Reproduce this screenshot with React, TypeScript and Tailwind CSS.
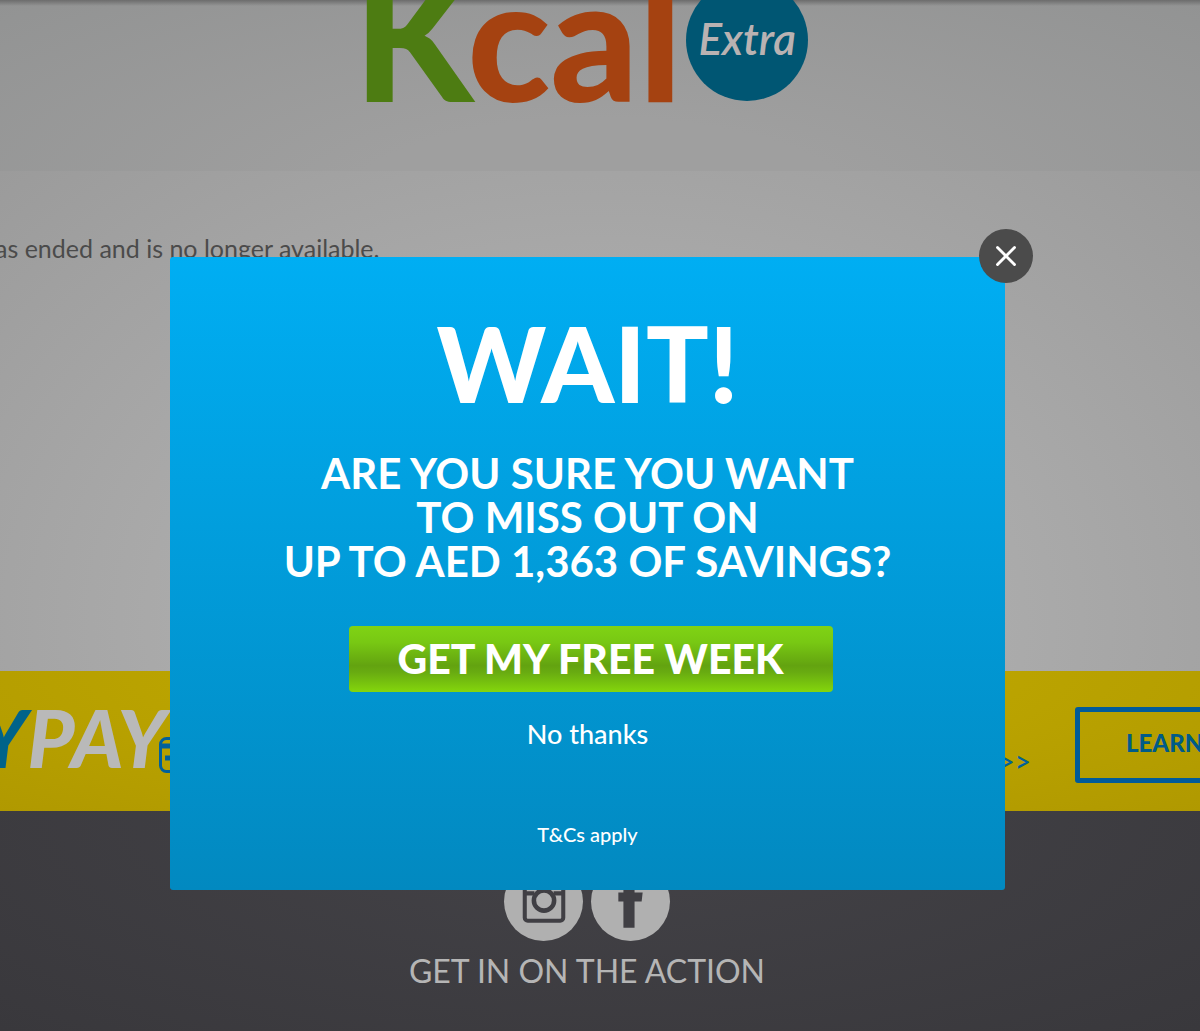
import { X } from "lucide-react";

function InstagramIcon() {
  return (
    <svg viewBox="0 0 78 78" className="size-full" fill="none" aria-hidden="true">
      <rect x="20.5" y="20" width="38" height="38" rx="3" stroke="#403f44" strokeWidth="4" />
      <path d="M20 31h10M49 31h10" stroke="#403f44" strokeWidth="4" />
      <circle cx="39.5" cy="38" r="10" stroke="#403f44" strokeWidth="4.5" />
    </svg>
  );
}

function FacebookIcon() {
  return (
    <svg viewBox="0 0 78 78" className="size-full" aria-hidden="true">
      <path
        d="M32 65V39h-5v-9h5v-6c0-7 4-10 10-10h8v9h-4c-2 0-3 1-3 3v4h8l-1 9h-7v26z"
        fill="#403f44"
      />
    </svg>
  );
}

function CardIcon() {
  return (
    <svg viewBox="0 0 50 36" className="h-9 w-[50px] shrink-0" fill="none" aria-hidden="true">
      <rect x="1.5" y="1.5" width="47" height="33" rx="6" stroke="#00609c" strokeWidth="3" />
      <path d="M1 9h48" stroke="#00609c" strokeWidth="5" />
      <path d="M6 21h10" stroke="#00609c" strokeWidth="5" />
    </svg>
  );
}

function SiteHeader() {
  return (
    <header className="flex h-[171px] items-start justify-center gap-1 overflow-hidden bg-[linear-gradient(to_bottom,#6c6c6c,#6c6c6c00_6px),radial-gradient(ellipse_at_50%_120%,#9f9f9f_30%,#929393)] pr-[38px]">
      <div className="mt-[-54px] text-[172px] leading-[180px] font-black text-[#a54211]">
        <span className="text-[#4d7c12]">K</span>cal
      </div>
      <div className="mt-[-21px] flex size-[122px] items-center justify-center rounded-full bg-[#005673] pb-1 text-[44px] font-semibold text-[#b9b2b2] italic">
        Extra
      </div>
    </header>
  );
}

function PayBanner() {
  return (
    <section className="flex h-[140px] items-center justify-between overflow-hidden bg-[radial-gradient(ellipse_at_50%_0%,#c4ad00,#b09900)]">
      <div className="flex shrink-0 items-center">
        <p className="-ml-[22px] pb-2 text-[80px] leading-[84px] font-black text-[#b9b9b9] italic">
          <span className="text-[#00638a]">Y</span>PAY
        </p>
        <div className="-ml-2 mt-7">
          <CardIcon />
        </div>
      </div>
      <div className="flex shrink-0 items-center gap-11">
        <span className="mt-10 text-[28px] font-medium text-[#00609c]">&gt;&gt;</span>
        <button
          type="button"
          className="mt-2 -mr-10 h-[76px] w-[165px] rounded-[3px] border-[5px] border-[#005b9a] pb-1 pl-[46px] text-left text-2xl font-black text-[#005b88]"
        >
          LEARN
        </button>
      </div>
    </section>
  );
}

function SiteFooter() {
  return (
    <footer className="flex flex-1 flex-col items-center bg-[radial-gradient(ellipse_at_50%_0%,#444348,#39383c)] pt-[51px] pr-[26px]">
      <div className="flex gap-2">
        <a href="#instagram" aria-label="Instagram" className="size-[79px] rounded-full bg-[#b0b0b0]">
          <InstagramIcon />
        </a>
        <a href="#facebook" aria-label="Facebook" className="size-[79px] rounded-full bg-[#b0b0b0]">
          <FacebookIcon />
        </a>
      </div>
      <p className="mt-[10px] text-[32px] leading-10 text-[#b5b5b5]">GET IN ON THE ACTION</p>
    </footer>
  );
}

function OfferDialog() {
  return (
    <div
      role="dialog"
      aria-labelledby="offer-title"
      className="relative flex w-full max-w-[835px] flex-col items-center rounded-[3px] bg-linear-to-b from-[#00aef3] to-[#0289c0] pt-[46px] pb-9 text-center text-white"
    >
      <button
        type="button"
        aria-label="Close"
        className="absolute -top-7 -right-7 flex size-[54px] items-center justify-center rounded-full bg-[#4b4b4b]"
      >
        <X size={34} strokeWidth={2} />
      </button>
      <h1 id="offer-title" className="text-[104px] leading-[120px] font-black">
        WAIT!
      </h1>
      <p className="mt-7 text-[42px] leading-[44px] font-bold">
        ARE YOU SURE YOU WANT
        <br />
        TO MISS OUT ON
        <br />
        UP TO AED 1,363 OF SAVINGS?
      </p>
      <button
        type="button"
        className="mt-[43px] ml-[6px] h-[66px] w-[484px] rounded bg-[linear-gradient(to_bottom,#80d314,#78c813_25%,#63a310_60%,#68ab11_70%,#84d60c)] text-[41px] leading-[60px] font-black"
      >
        GET MY FREE WEEK
      </button>
      <button type="button" className="mt-[22px] text-[27px] leading-10 font-medium">
        No thanks
      </button>
      <a href="#terms" className="mt-[60px] text-xl leading-10 font-medium">
        T&amp;Cs apply
      </a>
    </div>
  );
}

export default function App() {
  return (
    <div className="relative flex min-h-screen flex-col overflow-hidden font-['Lato',sans-serif]">
      <SiteHeader />
      <main className="h-[500px] bg-[radial-gradient(ellipse_at_50%_90%,#b9b9b9,#9b9b9b)] pt-[61px]">
        <p className="-ml-[5px] text-[25px] leading-8 text-[#4b4b4b]">as ended and is no longer available.</p>
      </main>
      <PayBanner />
      <SiteFooter />
      <div className="absolute inset-0 flex items-start justify-center pt-[257px] pr-[25px]">
        <OfferDialog />
      </div>
    </div>
  );
}
